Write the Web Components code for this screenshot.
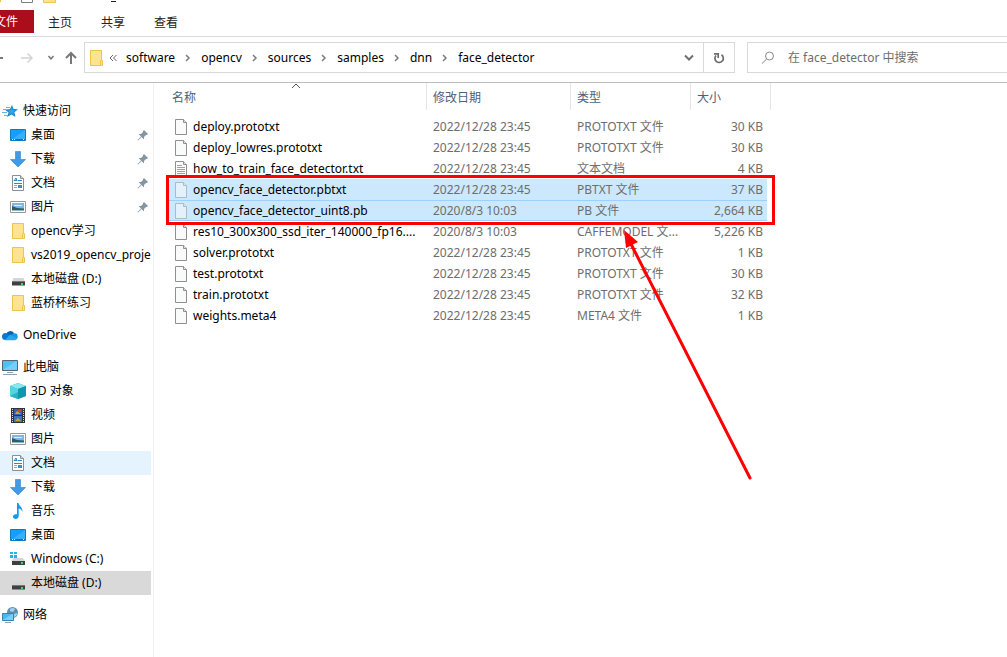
<!DOCTYPE html>
<html lang="zh-CN">
<head>
<meta charset="utf-8">
<title>face_detector</title>
<style>
html,body{margin:0;height:100%;background:#fff}
body{font:12px/16px "Noto Sans","Noto Sans CJK SC",sans-serif;color:#000;overflow:hidden}
</style>
</head>
<body>
<file-explorer></file-explorer>
<script>
const doc = (lines) => `<svg viewBox="0 0 14 18" width="14" height="18"><path d="M1.5 1.5h8l3 3v12h-11z" fill="#f9fafa" stroke="#8f8f8f"/><path d="M9.5 1.5v3h3" fill="#e4e4e4" stroke="#8f8f8f"/>${lines ? '<path d="M3 5.5h5M3 7.5h8M3 9.5h8M3 11.5h8M3 13.5h8" stroke="#a0a0a0"/>' : ''}</svg>`;
const drive = '<path d="M2.5 6h10l1.5 4H1z" fill="#d3d5d7"/><path d="M1 9.500h13v4H1z" fill="#3e4144"/><path d="M1 9.500h13" stroke="#777"/><rect x="10" y="11" width="2" height="2" fill="#36e05a"/>';
const i16 = (s) => `<svg viewBox="0 0 16 16" width="16" height="16">${s}</svg>`;
const ICONS = {
  file: doc(false),
  text: doc(true),
  folder: i16('<path d="M2 .5h12v10h.8v5H2z" fill="#ffe391"/><path d="M2.500.5h11v10h1v5h-12z" fill="none" stroke="#edc54c"/><path d="M12.500 15v-4l1-1" fill="none" stroke="#edc54c"/>'),
  star: i16('<path d="M10 2l1.500 4 4.500.3-3.600 2.900 1 4.800-3.900-2.500L5 14l1.600-4.600L3 6.700l5-.6z" fill="#1583cb"/><path d="M4 4.500h4M1 6.500h5M0 9.500h5M2 12.500h4" stroke="#5ab9ec"/><path d="M9.800 4l1 3 3 .3-2.500 1.900.8 2.800-2.700-1.700L6.800 12l1-3-2.300-1.700 3.300-.3z" fill="#2ba6ec"/>'),
  desktop: i16('<path d="M.5 2.500h15v11H.5z" fill="#12a0ff" stroke="#1778bb"/><path d="M1 13L15 3v10z" fill="#36afff"/><path d="M1 12.500h14" stroke="#0870bd"/><path d="M2 12.500h1M4 12.500h1M13 12.500h1" stroke="#fff"/>'),
  download: i16('<path d="M5.500.5h5v8h5L8 16 .5 8.500h5z" fill="#3d9be9" stroke="#2f7fc9" stroke-width=".6"/>'),
  document: i16('<path d="M2.500.5h8l3 3v12h-11z" fill="#fff" stroke="#8b8f94"/><path d="M10.500.5v3h3" fill="#ddd" stroke="#8b8f94"/><path d="M4 6l2-3 1 3M4 5.500h3M8 5.500h4M4 8.500h8" fill="none" stroke="#1e8fd5"/><path d="M4 10.500h3M4 12.500h3" stroke="#9aa"/><path d="M8 10h4v3H8z" fill="#3b8fc7"/>'),
  picture: i16('<path d="M.5 2.500h15v11H.5z" fill="#fff" stroke="#999"/><path d="M2 4h12v8H2z" fill="#7fb6e8"/><path d="M4 6.500h8" stroke="#e2effa"/><path d="M2 7l5 2 7 .5V12H2z" fill="#365e58"/><path d="M2 11.500h12" stroke="#8ab6d0"/>'),
  cloud: i16('<path d="M4 7.500A4.500 4.500 0 0 1 12 6l-2 5H3z" fill="#0a61b4"/><circle cx="3.500" cy="9.500" r="3.500" fill="#0c78d1"/><circle cx="12.500" cy="9.500" r="3.200" fill="#1795e6"/><path d="M3 13l5-5.500 7.500 4-2.500 1.700H3z" fill="#27a8ee"/>'),
  pc: i16('<path d="M.5 1.500h15v10H.5z" fill="#4fbff7" stroke="#56656f"/><path d="M1 11L14 2h1v9z" fill="#74d0fb"/><path d="M5 13.500h6M1 15.500h14" stroke="#8ba3b4"/>'),
  cube: i16('<path d="M8 0l8 3v10l-8 3-8-3V3z" fill="#22b6cd"/><path d="M8 0l8 3-8 3-8-3z" fill="#8be6ef"/><path d="M0 3l8 3v10l-8-3z" fill="#56d2e0"/><path d="M8 6l8-3v10l-8 3z" fill="#1197ad"/><path d="M0 13l8-4v7z" fill="#25b3c8"/>'),
  video: i16('<path d="M1 1h14v15H1z" fill="#333"/><path d="M4 2h8v6H4z" fill="#3562b4"/><path d="M4 9h8v6H4z" fill="#3c73c8"/><path d="M5 7l2-3 4 3zM5 14l3-3 3 3z" fill="#d0a232"/><path d="M8 3h3v2H8z" fill="#c94930"/><path d="M2.500 2v13M13.500 2v13" stroke="#ddd" stroke-dasharray="1 1"/>'),
  music: i16('<path d="M7 0h1.500c.3 3 4.500 4 3.800 9-.6-2.500-2-3.200-3.600-3.500V13c0 4-6.200 3.600-5.700.5.300-2 2.300-2.700 4-2.200z" fill="#109bf0"/>'),
  windrive: i16('<path d="M4 7h9l2 3H1z" fill="#d3d5d7"/><path d="M2 10h13v4H2z" fill="#3e4144"/><path d="M11 11h2v2h-2z" fill="#36e05a"/><path d="M0 1h3v2H0zM4 1h3v2H4zM0 4h3v3H0zM4 4h3v3H4z" fill="#19b5f1"/>'),
  drive: i16('<g transform="translate(1 1)">' + drive + '</g>'),
  network: i16('<circle cx="10.500" cy="5.500" r="5.500" fill="#5f90b2"/><path d="M8 2q3-2 5 0l-2 3-3-1zM12 7l3-1q0 3-3 4z" fill="#a6d3e4"/><path d="M.5 6.500h11v7H.5z" fill="#47b8f4" stroke="#3b80af"/><path d="M1 13l9-6h1v6z" fill="#78cff8"/><path d="M3 15.500h6" stroke="#8ba3b4"/>'),
  pin: '<svg viewBox="0 0 12 12" width="12" height="12"><path d="M7 1l4 4-1 1-1 0-2 2v2.500L4.500 8 1 11.500.5 11 4 7.500 1.500 5H4l2-2V2z" fill="#8695a1"/></svg>',
  back: '<svg viewBox="0 0 5 14" width="5" height="14"><path d="M0 7h3" stroke="#777" stroke-width="2"/></svg>',
  forward: '<svg viewBox="0 0 14 14" width="14" height="14"><path d="M1 7h11M7.500 2.500L12 7l-4.500 4.500" fill="none" stroke="#d4d4d4" stroke-width="1.500"/></svg>',
  up: '<svg viewBox="0 0 12 14" width="12" height="14"><path d="M6 13V2M1 7l5-5 5 5" fill="none" stroke="#777" stroke-width="2"/></svg>',
  down: '<svg viewBox="0 0 8 6" width="8" height="6"><path d="M1.500 1L4 3.800 6.500 1" fill="none" stroke="#777" stroke-width="1.500"/></svg>',
  drop: '<svg viewBox="0 0 10 8" width="10" height="8"><path d="M1 1.500l4 4 4-4" fill="none" stroke="#707070" stroke-width="2"/></svg>',
  next: '<svg viewBox="0 0 6 8" width="6" height="8"><path d="M1 1l3 3-3 3" fill="none" stroke="#7d7d7d" stroke-width="1.500"/></svg>',
  more: '<svg viewBox="0 0 8 8" width="8" height="8"><path d="M4 1L1 4l3 3M7.500 1l-3 3 3 3" fill="none" stroke="#666"/></svg>',
  refresh: '<svg viewBox="0 0 12 12" width="12" height="12"><path d="M8.500 2.800A4.200 4.200 0 1 1 3 3.500M1 1.800h4.200V6" fill="none" stroke="#6d6d6d" stroke-width="1.700"/></svg>',
  search: '<svg viewBox="0 0 14 14" width="14" height="14"><circle cx="8.500" cy="5" r="4" fill="none" stroke="#888"/><path d="M5.600 8L1 12.500" stroke="#888"/></svg>',
  sort: '<svg viewBox="0 0 10 6" width="10" height="6"><path d="M1 5l4-4 4 4" fill="none" stroke="#555"/></svg>'
};

class ShellIcon extends HTMLElement {
  connectedCallback() {
    this.attachShadow({mode: 'open'}).innerHTML =
      `<style>:host{display:inline-flex;flex:none}svg{display:block}</style>${ICONS[this.getAttribute('name')]}`;
  }
}
customElements.define('shell-icon', ShellIcon);

class RibbonTabs extends HTMLElement {
  connectedCallback() {
    this.attachShadow({mode: 'open'}).innerHTML = `<style>
      :host{display:block;border-bottom:1px solid #dadbdc}
      .title{height:10px;overflow:hidden}
      .title svg{display:block}
      nav{display:flex;align-items:center;gap:29px;height:23px;margin-bottom:3px}
      button{font:inherit;color:#222;background:none;border:0;padding:2px 0 0;height:23px;white-space:nowrap}
      .file{width:34px;margin-right:-15px;padding:0 16px 0 0;background:#ab0d1b;color:#fff;display:flex;justify-content:flex-end;align-items:center;overflow:hidden}
    </style>
    <div class="title"><svg width="120" height="10" viewBox="0 0 120 10">
      <path d="M0 0h1v2H0z" fill="#edc54c"/><path d="M21.500 0v2.500h11V0" fill="#fff" stroke="#7e7e7e"/>
      <path d="M43.500 0v2.500h12V0" fill="#ffe391" stroke="#edc54c"/><path d="M111 1h5v1h-5z" fill="#222"/></svg></div>
    <nav><button class="file">文件</button><button>主页</button><button>共享</button><button>查看</button></nav>`;
  }
}
customElements.define('ribbon-tabs', RibbonTabs);

class AddressBar extends HTMLElement {
  connectedCallback() {
    const crumbs = this.getAttribute('path').split('/');
    this.attachShadow({mode: 'open'}).innerHTML = `<style>
      :host{display:flex;align-items:center;height:41px;border-bottom:1px solid #bcbcbc;padding-bottom:4px}
      button{font:inherit;color:inherit;background:none;border:0;padding:0;display:flex;align-items:center;justify-content:center}
      .nav{display:flex;align-items:center;width:84px;flex:none}
      .back{width:20px;justify-content:flex-start}.fwd{width:14px}.recent{width:33px}.up{width:8px}
      .box{display:flex;align-items:center;box-sizing:border-box;height:31px;border:1px solid #d9d9d9;flex:1;min-width:0}
      .crumbs{display:flex;align-items:center;flex:1;min-width:0;overflow:hidden;padding-left:3px}
      .more{margin:0 9px 0 5px}
      .sep{width:26px;display:flex;justify-content:center}
      a{color:#000;text-decoration:none;white-space:nowrap}
      .drop{width:29px;height:29px}
      .refresh{width:31px;height:29px;border-left:1px solid #d9d9d9}
      .search{flex:0 0 260px;margin-left:12px;border-right:0;padding-left:13px;gap:13px}
      input{font:inherit;color:#6d6d6d;border:0;padding:0;outline:0;background:none;flex:1;min-width:0}
      input::placeholder{color:#6d6d6d;opacity:1}
    </style>
    <div class="nav"><button class="back" aria-label="后退"><shell-icon name="back"></shell-icon></button>
      <button class="fwd" aria-label="前进"><shell-icon name="forward"></shell-icon></button>
      <button class="recent" aria-label="最近"><shell-icon name="down"></shell-icon></button>
      <button class="up" aria-label="上移"><shell-icon name="up"></shell-icon></button></div>
    <div class="box"><div class="crumbs"><shell-icon name="folder"></shell-icon><shell-icon class="more" name="more"></shell-icon>${
      crumbs.map(c => `<a href="#">${c}</a>`).join('<span class="sep"><shell-icon name="next"></shell-icon></span>')}</div>
      <button class="drop" aria-label="展开"><shell-icon name="drop"></shell-icon></button>
      <button class="refresh" aria-label="刷新"><shell-icon name="refresh"></shell-icon></button></div>
    <div class="box search"><shell-icon name="search"></shell-icon><input type="text" aria-label="搜索" placeholder="在 ${crumbs[crumbs.length - 1]} 中搜索"></div>`;
  }
}
customElements.define('address-bar', AddressBar);

class TreeItem extends HTMLElement {
  connectedCallback() {
    this.attachShadow({mode: 'open'}).innerHTML = `<style>
      :host{display:block}
      :host([root]:not(:first-child)){margin-top:8px}
      a{display:flex;align-items:center;gap:5px;height:24px;box-sizing:border-box;padding-left:10px;color:#000;text-decoration:none;white-space:nowrap;overflow:hidden}
      :host([root]) a{padding-left:2px}
      :host([hot]) a{background:#e5f3ff}
      :host([current]) a{background:#d9d9d9}
      .pin{margin:0 2px 0 auto}
    </style><a href="#"><shell-icon name="${this.getAttribute('icon')}"></shell-icon><span><slot></slot></span>${
      this.hasAttribute('pinned') ? '<shell-icon class="pin" name="pin"></shell-icon>' : ''}</a>`;
  }
}
customElements.define('tree-item', TreeItem);

class FileTable extends HTMLElement {
  connectedCallback() {
    const rows = [
      ['deploy.prototxt', '2022/12/28 23:45', 'PROTOTXT 文件', '30 KB'],
      ['deploy_lowres.prototxt', '2022/12/28 23:45', 'PROTOTXT 文件', '30 KB'],
      ['how_to_train_face_detector.txt', '2022/12/28 23:45', '文本文档', '4 KB', '', 'text'],
      ['opencv_face_detector.pbtxt', '2022/12/28 23:45', 'PBTXT 文件', '37 KB', 'sel'],
      ['opencv_face_detector_uint8.pb', '2020/8/3 10:03', 'PB 文件', '2,664 KB', 'sel focus'],
      ['res10_300x300_ssd_iter_140000_fp16....', '2020/8/3 10:03', 'CAFFEMODEL 文...', '5,226 KB'],
      ['solver.prototxt', '2022/12/28 23:45', 'PROTOTXT 文件', '1 KB'],
      ['test.prototxt', '2022/12/28 23:45', 'PROTOTXT 文件', '30 KB'],
      ['train.prototxt', '2022/12/28 23:45', 'PROTOTXT 文件', '32 KB'],
      ['weights.meta4', '2022/12/28 23:45', 'META4 文件', '1 KB']
    ];
    this.attachShadow({mode: 'open'}).innerHTML = `<style>
      :host{display:block;position:relative}
      table{border-collapse:separate;border-spacing:0;table-layout:fixed;width:602px}
      .c1{width:258px}.c2{width:144px}.c3{width:120px}.c4{width:80px}
      th{height:27px;padding:2px 6px 0;text-align:left;font-weight:400;color:#4c607a;border-right:1px solid #e5e5e5;box-sizing:border-box}
      th:first-child{padding-left:3px}
      thead::after{content:"";display:block;height:6px}
      td{height:21px;line-height:16px;padding:0 6px;color:#6d6d6d;white-space:nowrap;box-sizing:border-box}
      td:first-child{color:#000;padding-left:5px}
      td:last-child{text-align:right;padding-right:4px;border-right:4px solid transparent;background-clip:padding-box}
      .name{display:flex;align-items:center;gap:5px;height:21px}
      .sel td{background-color:#cce8ff}
      .sel shell-icon{opacity:.5}
      .focus td{box-shadow:inset 0 1px #99d1ff,inset 0 -1px #99d1ff}
      .sort{position:absolute;left:122px;top:0}
      .frame{position:absolute;left:-3px;top:92px;width:603px;height:44px;border:3px solid #f00}
      .arrow{position:absolute;left:450px;top:146px}
    </style>
    <table><colgroup><col class="c1"><col class="c2"><col class="c3"><col class="c4"></colgroup>
      <thead><tr><th>名称</th><th>修改日期</th><th>类型</th><th>大小</th></tr></thead>
      <tbody>${rows.map(([n, d, t, s, c = '', i = 'file']) =>
        `<tr class="${c}"><td><div class="name"><shell-icon name="${i}"></shell-icon><span>${n}</span></div></td><td>${d}</td><td>${t}</td><td>${s}</td></tr>`).join('')}</tbody></table>
    <shell-icon class="sort" name="sort"></shell-icon>
    <div class="frame"></div>
    <svg class="arrow" width="140" height="256" viewBox="0 0 140 256"><path d="M12 15L131 249" stroke="#f00" stroke-width="3" stroke-linecap="round"/><path d="M5 1l2 18 12-6z" fill="#f00"/></svg>`;
  }
}
customElements.define('file-table', FileTable);

class FileExplorer extends HTMLElement {
  connectedCallback() {
    this.attachShadow({mode: 'open'}).innerHTML = `<style>
      :host{display:flex;flex-direction:column;height:100vh}
      .body{display:flex;flex:1;min-height:0}
      nav{flex:none;width:151px;padding:16px 2px 0 0;border-right:1px solid #f0f0f0;overflow:hidden}
      main{flex:1;min-width:0;padding-left:15px}
    </style>
    <ribbon-tabs></ribbon-tabs>
    <address-bar path="software/opencv/sources/samples/dnn/face_detector"></address-bar>
    <div class="body"><nav>
      <tree-item root icon="star">快速访问</tree-item>
      <tree-item pinned icon="desktop">桌面</tree-item>
      <tree-item pinned icon="download">下载</tree-item>
      <tree-item pinned icon="document">文档</tree-item>
      <tree-item pinned icon="picture">图片</tree-item>
      <tree-item icon="folder">opencv学习</tree-item>
      <tree-item icon="folder">vs2019_opencv_proje</tree-item>
      <tree-item icon="drive">本地磁盘 (D:)</tree-item>
      <tree-item icon="folder">蓝桥杯练习</tree-item>
      <tree-item root icon="cloud">OneDrive</tree-item>
      <tree-item root icon="pc">此电脑</tree-item>
      <tree-item icon="cube">3D 对象</tree-item>
      <tree-item icon="video">视频</tree-item>
      <tree-item icon="picture">图片</tree-item>
      <tree-item hot icon="document">文档</tree-item>
      <tree-item icon="download">下载</tree-item>
      <tree-item icon="music">音乐</tree-item>
      <tree-item icon="desktop">桌面</tree-item>
      <tree-item icon="windrive">Windows (C:)</tree-item>
      <tree-item current icon="drive">本地磁盘 (D:)</tree-item>
      <tree-item root icon="network">网络</tree-item>
    </nav><main><file-table></file-table></main></div>`;
  }
}
customElements.define('file-explorer', FileExplorer);
</script>
</body>
</html>
